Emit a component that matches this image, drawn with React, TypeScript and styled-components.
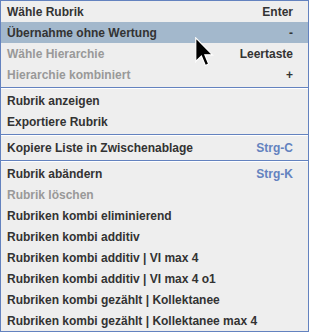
import React from "react";
import styled, { createGlobalStyle } from "styled-components";

type Item = {
  label: string;
  accel?: string;
  disabled?: boolean;
  selected?: boolean;
  blueAccel?: boolean;
};

const groups: Item[][] = [
  [
    { label: "Wähle Rubrik", accel: "Enter" },
    { label: "Übernahme ohne Wertung", accel: "-", selected: true },
    { label: "Wähle Hierarchie", accel: "Leertaste", disabled: true },
    { label: "Hierarchie kombiniert", accel: "+", disabled: true },
  ],
  [{ label: "Rubrik anzeigen" }, { label: "Exportiere Rubrik" }],
  [{ label: "Kopiere Liste in Zwischenablage", accel: "Strg-C", blueAccel: true }],
  [
    { label: "Rubrik abändern", accel: "Strg-K", blueAccel: true },
    { label: "Rubrik löschen", disabled: true },
    { label: "Rubriken kombi eliminierend" },
    { label: "Rubriken kombi additiv" },
    { label: "Rubriken kombi additiv | VI max 4" },
    { label: "Rubriken kombi additiv | VI max 4 o1" },
    { label: "Rubriken kombi gezählt | Kollektanee" },
    { label: "Rubriken kombi gezählt | Kollektanee max 4" },
  ],
];

const App = () => (
  <>
    <GlobalStyle />
    <Menu>
      {groups.map((group, gi) => (
        <React.Fragment key={gi}>
          {gi > 0 && <Separator />}
          {group.map((item) => (
            <Row key={item.label} selected={item.selected}>
              <Label disabled={item.disabled}>{item.label}</Label>
              {item.accel && <Accel blue={item.blueAccel}>{item.accel}</Accel>}
            </Row>
          ))}
        </React.Fragment>
      ))}
      <Cursor width="19" height="30" viewBox="0 0 12.5 19.5">
        <path
          d="M0.5 0.5 L0.5 16 L4.2 12.4 L6.8 18.6 L9 17.6 L6.5 11.6 L11.5 11.6 Z"
          fill="#000"
          stroke="#fff"
          strokeWidth="0.8"
          strokeLinejoin="miter"
        />
      </Cursor>
    </Menu>
  </>
);

const GlobalStyle = createGlobalStyle`
  html, body {
    margin: 0;
    padding: 0;
    background: #eeeeee;
  }
`;

const Menu = styled.div`
  position: relative;
  width: 309px;
  height: 332px;
  box-sizing: border-box;
  border: 1px solid #6382bf;
  background: #eeeeee;
  display: flex;
  flex-direction: column;
  font-family: "Liberation Sans", Arial, sans-serif;
  font-weight: bold;
  font-size: 12px;
  overflow: hidden;
`;

interface IRow {
  selected?: boolean;
}
const Row = styled.div<IRow>`
  height: 21px;
  flex: none;
  display: flex;
  align-items: center;
  justify-content: space-between;
  padding: 1px 15px 0 6px;
  box-sizing: border-box;
  background: ${(props) => (props.selected ? "#a3b8cc" : "transparent")};
`;

interface ILabel {
  disabled?: boolean;
}
const Label = styled.span<ILabel>`
  color: ${(props) => (props.disabled ? "#999999" : "#333333")};
  white-space: nowrap;
`;

interface IAccel {
  blue?: boolean;
}
const Accel = styled.span<IAccel>`
  color: ${(props) => (props.blue ? "#6382bf" : "#333333")};
  white-space: nowrap;
`;

const Separator = styled.div`
  height: 5px;
  flex: none;
  box-sizing: border-box;
  padding-top: 2px;
  &::before {
    content: "";
    display: block;
    height: 1px;
    background: #6382bf;
  }
  &::after {
    content: "";
    display: block;
    height: 1px;
    background: #ffffff;
  }
`;

const Cursor = styled.svg`
  position: absolute;
  left: 194px;
  top: 36px;
`;

export default App;
